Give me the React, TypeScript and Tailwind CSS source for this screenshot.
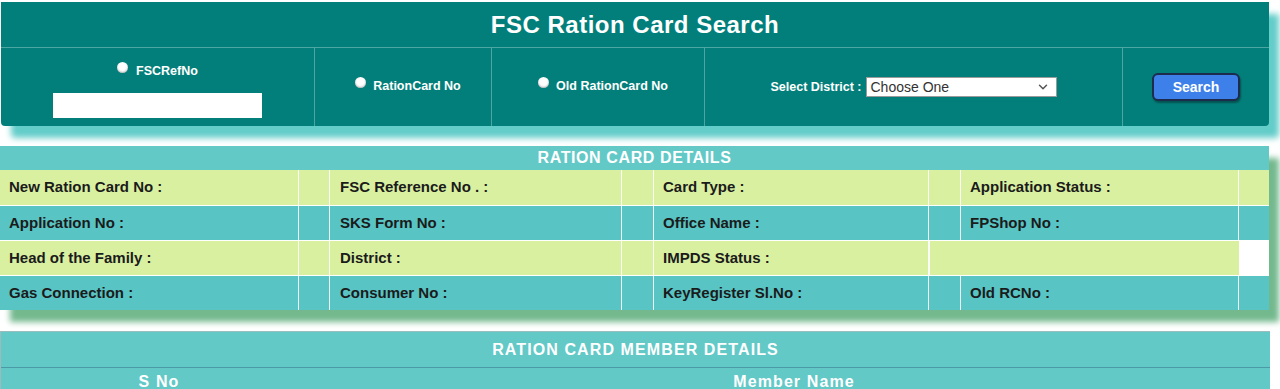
import { ChevronDown } from "lucide-react";

const Radio = () => (
  <span className="inline-block w-[11px] h-[11px] shrink-0 rounded-full bg-white shadow-[inset_0_-1px_2px_rgba(0,0,0,0.3)]" />
);

const green = "bg-[#d9f0a1]";
const teal = "bg-[#58c4c4]";

const rows: { bg: string; cells: string[] }[] = [
  { bg: green, cells: ["New Ration Card No :", "FSC Reference No . :", "Card Type :", "Application Status :"] },
  { bg: teal, cells: ["Application No :", "SKS Form No :", "Office Name :", "FPShop No :"] },
  { bg: green, cells: ["Head of the Family :", "District :", "IMPDS Status :", ""] },
  { bg: teal, cells: ["Gas Connection :", "Consumer No :", "KeyRegister Sl.No :", "Old RCNo :"] },
];

const App = () => {
  return (
    <div className="w-[1280px] h-[389px] overflow-hidden bg-white font-['Liberation_Sans',Arial,sans-serif]">
      {/* search panel */}
      <div className="ml-px mt-[2px] w-[1268px] rounded-b-[4px] bg-[#037f7b] shadow-[10px_12px_6px_#63cdc9]">
        <div className="h-[46px] border-b border-[#4ea6a3] flex items-center justify-center text-white font-bold text-[24px] tracking-[0.5px]">
          FSC Ration Card Search
        </div>
        <div className="grid grid-cols-[313px_177px_213px_418px_147px] h-[78px] text-white font-bold text-[12.5px]">
          <div className="flex flex-col items-center pt-[14px]">
            <div className="flex items-start gap-[8px]">
              <Radio />
              <span className="pt-[2px] leading-[15px]">FSCRefNo</span>
            </div>
            <div className="mt-[14px] w-[209px] h-[25px] bg-white" />
          </div>
          <div className="border-l border-[#4ea6a3] flex items-center justify-center pl-[10px] pb-[4px]">
            <div className="flex items-start gap-[7px]">
              <Radio />
              <span className="pt-[2px] leading-[15px]">RationCard No</span>
            </div>
          </div>
          <div className="border-l border-[#4ea6a3] flex items-center justify-center pl-[10px] pb-[4px]">
            <div className="flex items-start gap-[7px]">
              <Radio />
              <span className="pt-[2px] leading-[15px]">Old RationCard No</span>
            </div>
          </div>
          <div className="border-l border-[#4ea6a3] flex items-center justify-center gap-[4px]">
            <span>Select District :</span>
            <div className="w-[191px] h-[20px] bg-white border border-[#9a9a9a] flex items-center justify-between pl-[4px] pr-[6px] text-[14px] font-normal text-[#333]">
              <span>Choose One</span>
              <ChevronDown size={14} strokeWidth={2.5} color="#555" />
            </div>
          </div>
          <div className="border-l border-[#4ea6a3] flex items-center justify-center">
            <button className="w-[88px] h-[28px] rounded-[6px] bg-[#3d80e9] border-2 border-[#1d2c4c] text-white font-bold text-[14px] shadow-[1px_2px_2px_rgba(0,0,0,0.35)]">
              Search
            </button>
          </div>
        </div>
      </div>

      {/* ration card details */}
      <div className="mt-[20px] w-[1269px] shadow-[10px_12px_6px_#74b98e]">
        <div className="h-[24px] bg-[#62c9c7] flex items-center justify-center text-white font-bold text-[16px] tracking-[0.6px]">
          RATION CARD DETAILS
        </div>
        {rows.map((row, i) => (
          <div
            key={i}
            className={`grid grid-cols-[299px_31px_292px_32px_275px_32px_278px_30px] h-[35px] ${i > 0 ? "border-t border-white/80" : ""} text-[15px] font-bold text-[#1b1b1b]`}
          >
            <div className={`${row.bg} border-r border-white/90 flex items-center pl-[9px]`}>{row.cells[0]}</div>
            <div className={`${row.bg} border-r border-white/90`} />
            <div className={`${row.bg} border-r border-white/90 flex items-center pl-[10px]`}>{row.cells[1]}</div>
            <div className={`${row.bg} border-r border-white/90`} />
            <div className={`${row.bg} border-r border-white/90 flex items-center pl-[9px]`}>{row.cells[2]}</div>
            {i === 2 ? (
              <>
                <div className={`${row.bg} col-span-2 border-l border-white/90`} />
                <div className="bg-white" />
              </>
            ) : (
              <>
                <div className={`${row.bg} border-r border-white/90`} />
                <div className={`${row.bg} border-r border-white/90 flex items-center pl-[9px]`}>{row.cells[3]}</div>
                <div className={row.bg} />
              </>
            )}
          </div>
        ))}
      </div>

      {/* member details */}
      <div className="mt-[21px] w-[1270px] bg-[#62c9c7] border-t border-l border-[#9bbcbc] text-white font-bold text-[16px] tracking-[1.1px]">
        <div className="h-[36px] border-b border-[#4b9aa6] flex items-center justify-center">
          RATION CARD MEMBER DETAILS
        </div>
        <div className="grid grid-cols-[316px_954px] h-[30px]">
          <div className="flex items-center justify-center pb-[2px]">S No</div>
          <div className="flex items-center justify-center pb-[2px]">Member Name</div>
        </div>
      </div>
    </div>
  );
};

export default App;
